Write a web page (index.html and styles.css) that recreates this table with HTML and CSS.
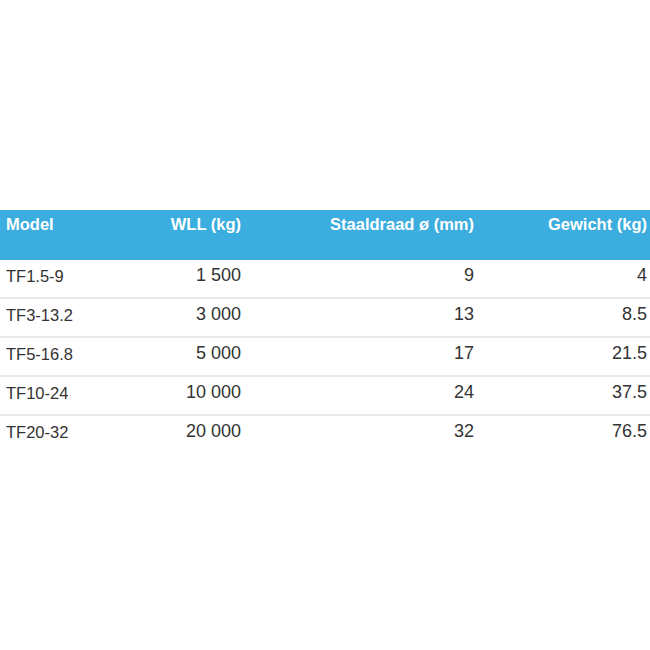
FILE: index.html
```html
<!DOCTYPE html>
<html>
<head>
<meta charset="utf-8">
<link rel="stylesheet" href="styles.css">
</head>
<body>
<div class="page">
  <div class="table">
    <div class="row head">
      <div class="c c1">Model</div>
      <div class="c c2">WLL (kg)</div>
      <div class="c c3">Staaldraad ø (mm)</div>
      <div class="c c4">Gewicht (kg)</div>
    </div>
    <div class="row">
      <div class="c c1">TF1.5-9</div>
      <div class="c c2 n">1 500</div>
      <div class="c c3 n">9</div>
      <div class="c c4 n">4</div>
    </div>
    <div class="row">
      <div class="c c1">TF3-13.2</div>
      <div class="c c2 n">3 000</div>
      <div class="c c3 n">13</div>
      <div class="c c4 n">8.5</div>
    </div>
    <div class="row">
      <div class="c c1">TF5-16.8</div>
      <div class="c c2 n">5 000</div>
      <div class="c c3 n">17</div>
      <div class="c c4 n">21.5</div>
    </div>
    <div class="row">
      <div class="c c1">TF10-24</div>
      <div class="c c2 n">10 000</div>
      <div class="c c3 n">24</div>
      <div class="c c4 n">37.5</div>
    </div>
    <div class="row last">
      <div class="c c1">TF20-32</div>
      <div class="c c2 n">20 000</div>
      <div class="c c3 n">32</div>
      <div class="c c4 n">76.5</div>
    </div>
  </div>
</div>
</body>
</html>
```
FILE: styles.css
```css
html, body {
  margin: 0;
  padding: 0;
  background: #ffffff;
}
.page {
  width: 650px;
  height: 650px;
  padding-top: 210px;
  box-sizing: border-box;
  font-family: "Liberation Sans", Arial, sans-serif;
  color: #333333;
}
.row {
  display: grid;
  grid-template-columns: 130px 111px 233px 173px;
  padding-right: 3px;
  height: 37px;
  border-bottom: 2px solid #e8e8e8;
  box-sizing: content-box;
  font-size: 16.5px;
  line-height: 20px;
}
.row.last {
  border-bottom: none;
}
.row.head {
  height: 50px;
  border-bottom: none;
  background: #3badde;
  color: #ffffff;
  font-weight: bold;
  font-size: 16.5px;
}
.c {
  padding-top: 6px;
  white-space: nowrap;
}
.head .c {
  padding-top: 4px;
}
.c1 {
  padding-left: 6px;
}
.c2, .c3, .c4 {
  text-align: right;
}
.n {
  font-size: 18px;
  padding-top: 5px;
}
```
